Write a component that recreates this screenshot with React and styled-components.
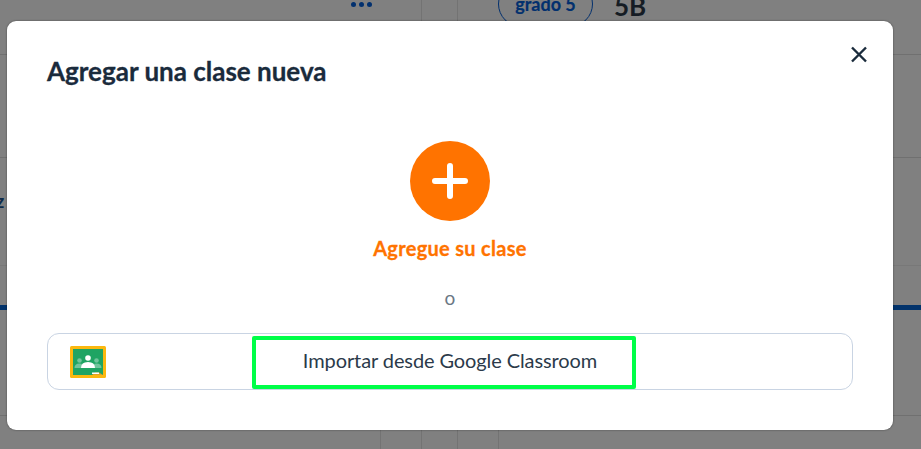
import React from "react";
import styled, { createGlobalStyle } from "styled-components";

const Global = createGlobalStyle`
  html, body { margin: 0; padding: 0; height: 100%; overflow: hidden; background: #808080; }
  #root { height: 100%; }
`;

const Page = styled.div`
  position: relative;
  width: 921px;
  height: 449px;
  overflow: hidden;
  background: #808080;
  font-family: Lato, "Liberation Sans", sans-serif;
`;

const Row = styled.div`
  display: grid;
  grid-template-columns: 381px 41px 36px 41px 1fr;
  height: ${(p) => p.$h}px;
  box-sizing: border-box;
  border-bottom: ${(p) => p.$line || "1px solid #707070"};
`;

const Cell = styled.div`
  display: flex;
  justify-content: ${(p) => p.$justify || "flex-start"};
  align-items: flex-start;
  border-right: ${(p) => (p.$ruled ? "1px solid #737373" : "none")};
`;

const Dots = styled.div`
  display: flex;
  gap: 3px;
  margin: 2px 9px 0 0;
  & > i {
    width: 5px;
    height: 5px;
    border-radius: 50%;
    background: #02306e;
  }
`;

const Grade = styled.span`
  box-sizing: border-box;
  display: inline-flex;
  align-items: center;
  justify-content: center;
  flex: none;
  width: 95px;
  height: 46px;
  margin: -19px 21px 0 -1px;
  border: 1px solid #02306e;
  border-radius: 23px;
  color: #02306e;
  font-weight: 700;
  font-size: 18px;
  -webkit-text-stroke: 0.2px #02306e;
`;

const Section = styled.span`
  margin-top: -10px;
  font-size: 26px;
  line-height: 32px;
  font-weight: 700;
  color: #151c24;
`;

const Clipped = styled.span`
  margin: 32px 0 0 -4px;
  font-size: 18px;
  line-height: 22px;
  font-weight: 700;
  color: #0d2a4a;
`;

const Modal = styled.div`
  position: absolute;
  left: 7px;
  top: 21px;
  box-sizing: border-box;
  width: 886px;
  height: 409px;
  padding: 0 40px;
  background: #fff;
  border-radius: 9px;
  box-shadow: 0 0 2px rgba(0, 0, 0, 0.5);
  display: flex;
  flex-direction: column;
`;

const Title = styled.h2`
  margin: 35px 0 0;
  font-size: 26px;
  line-height: 30px;
  font-weight: 700;
  color: #1a2b3c;
  -webkit-text-stroke: 0.3px #1a2b3c;
`;

const CloseButton = styled.button`
  position: absolute;
  top: 23px;
  right: 24px;
  width: 20px;
  height: 20px;
  padding: 0;
  border: 0;
  background: none;
  display: flex;
`;

const AddBlock = styled.div`
  display: flex;
  flex-direction: column;
  align-items: center;
  margin-top: 55px;
`;

const AddCircle = styled.div`
  width: 80px;
  height: 80px;
  border-radius: 50%;
  background: #ff7300;
  display: flex;
  align-items: center;
  justify-content: center;
`;

const AddLabel = styled.div`
  margin-top: 15px;
  font-size: 20px;
  line-height: 24px;
  letter-spacing: 0.3px;
  font-weight: 700;
  color: #ff7300;
  -webkit-text-stroke: 0.3px #ff7300;
`;

const Or = styled.div`
  margin-top: 28px;
  text-align: center;
  font-size: 19px;
  line-height: 20px;
  color: #6b7785;
`;

const ImportButton = styled.div`
  position: relative;
  box-sizing: border-box;
  height: 57px;
  margin-top: 25px;
  padding-bottom: 3px;
  border: 1px solid #c9d4e3;
  border-radius: 12px;
  display: flex;
  align-items: center;
  justify-content: center;
  font-size: 20px;
  letter-spacing: -0.1px;
  color: #2b3a4a;
`;

const ClassroomIcon = styled.svg`
  position: absolute;
  left: 22px;
  top: 12px;
`;

const Highlight = styled.div`
  position: absolute;
  left: 204px;
  top: 2px;
  width: 384px;
  height: 53px;
  box-sizing: border-box;
  border: 4px solid #00ff48;
  border-radius: 2px;
`;

export default function App() {
  return (
    <Page>
      <Global />
      <Row $h={55}>
        <Cell $justify="flex-end">
          <Dots>
            <i />
            <i />
            <i />
          </Dots>
        </Cell>
        <Cell $ruled />
        <Cell $ruled />
        <Cell />
        <Cell>
          <Grade>grado 5</Grade>
          <Section>5B</Section>
        </Cell>
      </Row>
      <Row $h={103} />
      <Row $h={108} $line="1px solid #787878">
        <Cell>
          <Clipped>z</Clipped>
        </Cell>
      </Row>
      <Row $h={44} $line="5px solid #02336b" />
      <Row $h={106} />
      <Row $h={33} $line="none">
        <Cell $ruled />
        <Cell $ruled />
        <Cell $ruled />
        <Cell $ruled />
        <Cell />
      </Row>
      <Modal>
        <Title>Agregar una clase nueva</Title>
        <CloseButton aria-label="Cerrar">
          <svg width="20" height="20" viewBox="0 0 20 20">
            <path d="M3 3.5 L17 17.5 M17 3.5 L3 17.5" stroke="#1a2b3c" strokeWidth="2.4" fill="none" />
          </svg>
        </CloseButton>
        <AddBlock>
          <AddCircle>
            <svg width="38" height="38" viewBox="0 0 38 38">
              <path d="M19 4 V34 M4 19 H34" stroke="#fff" strokeWidth="6" strokeLinecap="round" fill="none" />
            </svg>
          </AddCircle>
          <AddLabel>Agregue su clase</AddLabel>
        </AddBlock>
        <Or>o</Or>
        <ImportButton>
          <ClassroomIcon width="36" height="32" viewBox="0 0 36 32">
            <rect width="36" height="32" rx="1.5" fill="#fbb80f" />
            <rect x="3" y="3" width="30" height="26" fill="#1fa463" />
            <path d="M22 29 L25 26.5 H29 L33 29 Z" fill="#e0a126" />
            <circle cx="9.5" cy="14.5" r="2.3" fill="#71c49c" />
            <circle cx="26.5" cy="14.5" r="2.3" fill="#71c49c" />
            <path d="M4.5 22 Q4.5 17.5 9.5 17.5 Q14 17.5 14 22 Z M22 22 Q22 17.5 26.5 17.5 Q31.5 17.5 31.5 22 Z" fill="#71c49c" />
            <circle cx="18" cy="12" r="2.8" fill="#fff" />
            <path d="M11 22 Q11 16 18 16 Q25 16 25 22 Z" fill="#fff" />
            <rect x="22" y="26.5" width="7" height="1.5" fill="#fff" />
          </ClassroomIcon>
          Importar desde Google Classroom
          <Highlight />
        </ImportButton>
      </Modal>
    </Page>
  );
}
